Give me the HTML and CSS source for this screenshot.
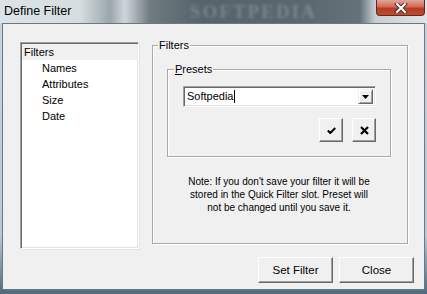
FILE: index.html
```html
<!DOCTYPE html>
<html lang="en">
<head>
    <meta charset="UTF-8">
    <title>Define Filter</title>
    <link rel="stylesheet" href="styles.css">
</head>
<body>
    <div class="window">
        <div class="titlebar">
            <span class="title">Define Filter</span>
            <span class="watermark">SOFTPEDIA</span>
            <div class="close-btn">
                <svg width="14" height="10" viewBox="0 0 14 10">
                    <path d="M3 1 L11 9 M11 1 L3 9" stroke="#3a3a3a" stroke-width="4" stroke-linecap="square"></path>
                    <path d="M3 1 L11 9 M11 1 L3 9" stroke="#ffffff" stroke-width="2" stroke-linecap="square"></path>
                </svg>
            </div>
        </div>

        <div class="client">
            <div class="main">
                <ul class="tree">
                    <li class="tree-root">Filters</li>
                    <li class="tree-item">Names</li>
                    <li class="tree-item">Attributes</li>
                    <li class="tree-item">Size</li>
                    <li class="tree-item">Date</li>
                </ul>

                <fieldset class="group filters-group">
                    <legend>Filters</legend>

                    <fieldset class="group presets-group">
                        <legend><u>P</u>resets</legend>
                        <div class="combo">
                            <span class="combo-text">Softpedia<span class="caret"></span></span>
                            <div class="combo-btn">
                                <svg width="7" height="4" viewBox="0 0 7 4"><path d="M0 0 H7 L3.5 4 Z" fill="#000"></path></svg>
                            </div>
                        </div>
                        <div class="preset-actions">
                            <div class="btn icon-btn">
                                <svg width="9" height="7" viewBox="0 0 9 7">
                                    <path d="M0.8 3.5 L3.3 6 L8.2 1" fill="none" stroke="#000" stroke-width="2"></path>
                                </svg>
                            </div>
                            <div class="btn icon-btn">
                                <svg width="9" height="9" viewBox="0 0 9 9">
                                    <path d="M1 1 L8 8 M8 1 L1 8" stroke="#000" stroke-width="2.2"></path>
                                </svg>
                            </div>
                        </div>
                    </fieldset>

                    <p class="note">Note: If you don't save your filter it will be<br>stored in the Quick Filter slot. Preset will<br>not be changed until you save it.</p>
                </fieldset>
            </div>

            <div class="dialog-buttons">
                <div class="btn push-btn">Set Filter</div>
                <div class="btn push-btn">Close</div>
            </div>
        </div>
    </div>
</body>
</html>
```

FILE: styles.css
```css
html, body {
    margin: 0;
    padding: 0;
}

body {
    width: 427px;
    height: 294px;
    overflow: hidden;
    font-family: 'Liberation Sans', Arial, sans-serif;
    font-size: 11px;
    color: #000;
    background: linear-gradient(to bottom, #c9d6e0 0%, #b9c8d3 80%, #4d6a80 100%);
}

.window {
    height: 294px;
    display: flex;
    flex-direction: column;
}

.titlebar {
    position: relative;
    height: 23px;
    display: flex;
    align-items: flex-start;
    background: linear-gradient(to right, #dde3e7 0px, #d6dde1 80px, #9aa6ac 110px, #cfd6da 125px, #6f7b81 150px, #55636a 200px, #5a676e 300px, #65727a 360px, #c5ced3 375px, #dfe5e8 427px);
}

.title {
    padding: 4px 0 0 4px;
    font-size: 12.5px;
    position: relative;
    z-index: 1;
}

.watermark {
    position: absolute;
    left: 190px;
    top: 1px;
    font-family: 'Liberation Serif', serif;
    font-size: 19px;
    font-weight: bold;
    letter-spacing: 2px;
    color: rgba(200, 210, 215, 0.3);
    filter: blur(1.4px);
}

.close-btn {
    position: absolute;
    right: 2px;
    top: 0;
    width: 47px;
    height: 15px;
    border: 1px solid #5b2a22;
    border-top: none;
    border-radius: 0 0 4px 4px;
    background: linear-gradient(to bottom, #e2a594 0%, #d06a54 45%, #b73a22 55%, #c24a2e 100%);
    display: flex;
    align-items: center;
    justify-content: center;
}

.client {
    margin: 0 2px;
    height: 265px;
    border: 1px solid #6c7780;
    background-color: #f0f0f0;
    display: flex;
    flex-direction: column;
}

.main {
    display: flex;
    align-items: flex-start;
    padding: 18px 0 0 17px;
}

.tree {
    list-style: none;
    margin: 0;
    padding: 1px 0 0 0;
    width: 117px;
    height: 204px;
    background-color: #fff;
    border-top: 1px solid #a0a0a0;
    border-left: 1px solid #a0a0a0;
    border-bottom: 1px solid #fff;
    border-right: 1px solid #fff;
    box-shadow: inset 1px 1px 0 #696969, inset -1px -1px 0 #e3e3e3, 1px 1px 0 #e3e3e3;
}

.tree li {
    height: 16px;
    line-height: 16px;
}

.tree-root {
    padding-left: 2px;
    margin-left: 1px;
    background-color: #f0f0f0;
}

.tree-item {
    padding-left: 21px;
}

.group {
    margin: 0;
    border: 1px solid #a9a9a9;
    box-shadow: inset 1px 1px 0 #fff, 1px 1px 0 #fff;
}

.group legend {
    padding: 0 1px;
    margin-left: -9px;
    line-height: 13px;
}

.filters-group {
    margin: -3px 0 0 13px;
    width: 254px;
    height: 205px;
    box-sizing: border-box;
    padding: 11px 16px 0 14px;
    display: flex;
    flex-direction: column;
}

.presets-group {
    width: 224px;
    box-sizing: border-box;
    padding: 10px 14px 14px 15px;
}

.combo {
    height: 21px;
    box-sizing: border-box;
    display: flex;
    align-items: stretch;
    background: #fff;
    border-top: 1px solid #a0a0a0;
    border-left: 1px solid #a0a0a0;
    border-bottom: 1px solid #fff;
    border-right: 1px solid #fff;
    box-shadow: inset 1px 1px 0 #696969, inset -1px -1px 0 #e3e3e3;
    padding: 2px;
}

.combo-text {
    flex: 1;
    padding-left: 1px;
    line-height: 15px;
    display: flex;
    align-items: center;
}

.caret {
    display: inline-block;
    width: 1px;
    height: 13px;
    background: #000;
    margin-left: 1px;
}

.combo-btn {
    width: 15px;
    box-sizing: border-box;
    background: #f0f0f0;
    border-top: 1px solid #f0f0f0;
    border-left: 1px solid #f0f0f0;
    border-right: 1px solid #696969;
    border-bottom: 1px solid #696969;
    box-shadow: inset 1px 1px 0 #fff, inset -1px -1px 0 #a0a0a0;
    display: flex;
    align-items: center;
    justify-content: center;
}

.preset-actions {
    display: flex;
    justify-content: flex-end;
    gap: 9px;
    margin-top: 11px;
}

.btn {
    box-sizing: border-box;
    background: #f0f0f0;
    border-top: 1px solid #fff;
    border-left: 1px solid #fff;
    border-right: 1px solid #696969;
    border-bottom: 1px solid #696969;
    box-shadow: inset -1px -1px 0 #a0a0a0;
    display: flex;
    align-items: center;
    justify-content: center;
}

.icon-btn {
    width: 24px;
    height: 24px;
}

.note {
    margin: 18px 0 0 0;
    text-align: center;
    font-size: 10px;
    line-height: 13px;
}

.dialog-buttons {
    display: flex;
    justify-content: flex-end;
    gap: 6px;
    padding: 8px 10px 0 0;
}

.push-btn {
    width: 75px;
    height: 26px;
    font-size: 11.5px;
}
```
